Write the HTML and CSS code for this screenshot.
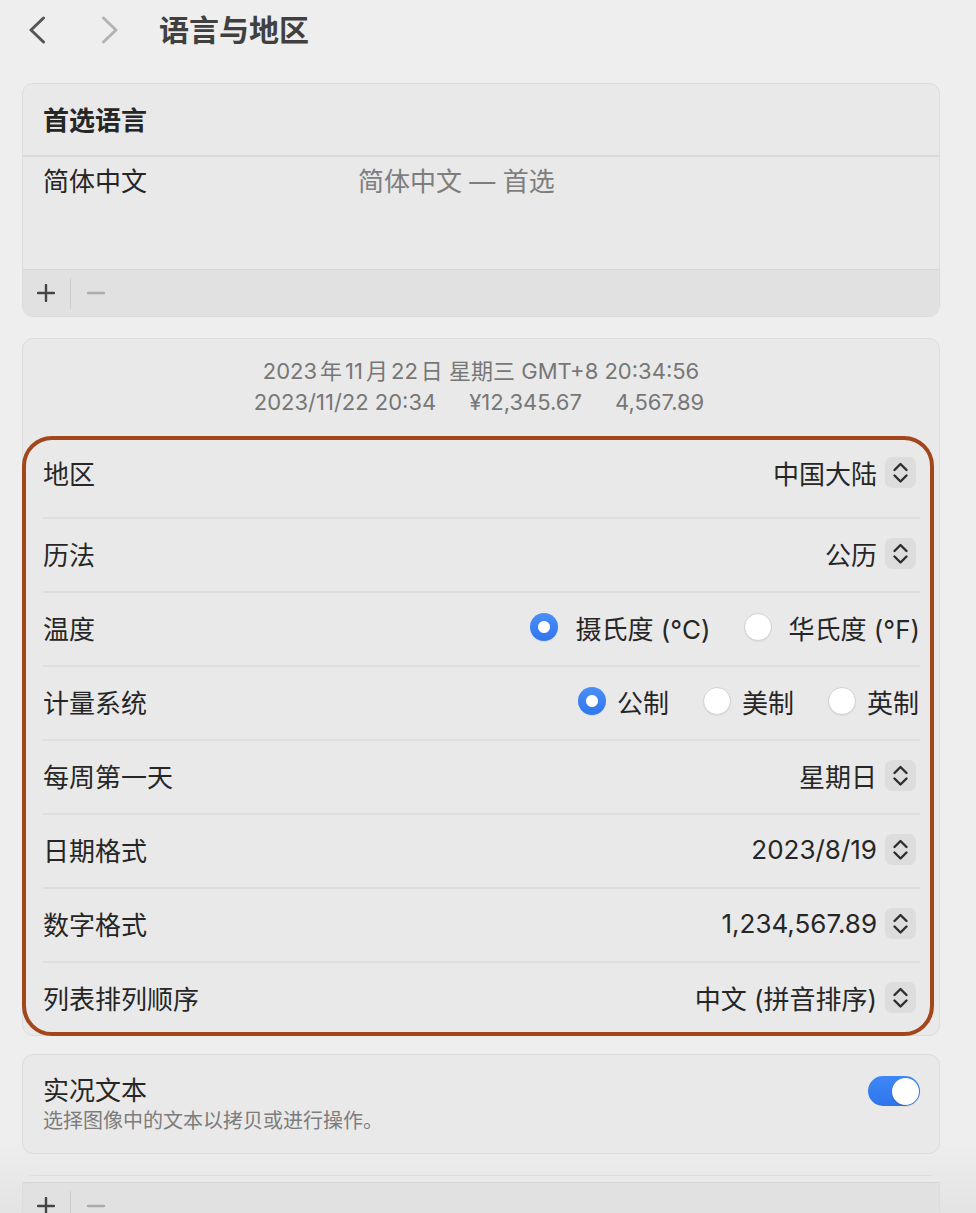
FILE: index.html
```html
<!DOCTYPE html>
<html lang="zh-CN">
<head>
<meta charset="utf-8">
<title>语言与地区</title>
<link rel="stylesheet" href="styles.css">
</head>
<body>
<header class="titlebar">
  <svg class="nav nav-back" width="16" height="28" viewBox="0 0 16 28"><polyline points="14.5,2 2,14 14.5,26" fill="none" stroke="currentColor" stroke-width="3" stroke-linecap="round" stroke-linejoin="round"/></svg>
  <svg class="nav nav-fwd" width="16" height="28" viewBox="0 0 16 28"><polyline points="1.5,2 14,14 1.5,26" fill="none" stroke="currentColor" stroke-width="3" stroke-linecap="round" stroke-linejoin="round"/></svg>
  <h1 class="title">语言与地区</h1>
</header>

<main class="content">
  <section class="card card-langs">
    <div class="card-head">首选语言</div>
    <div class="lang-list">
      <div class="lang-row"><span class="lang-name">简体中文</span><span class="lang-desc">简体中文 — 首选</span></div>
    </div>
    <div class="toolbar">
      <svg class="tb-plus" width="18" height="18" viewBox="0 0 18 18"><path d="M9 1V17M1 9H17" stroke="currentColor" stroke-width="2.4" stroke-linecap="round"/></svg>
      <span class="tb-div"></span>
      <svg class="tb-minus" width="18" height="18" viewBox="0 0 18 18"><path d="M1 9H17" stroke="currentColor" stroke-width="2.4" stroke-linecap="round"/></svg>
    </div>
  </section>

  <section class="card card-region">
    <div class="preview">
      <div class="preview-line">2023<span class="cj">年</span>11<span class="cj">月</span>22<span class="cj cj-end">日</span> 星期三 GMT+8 20:34:56</div>
      <div class="preview-line preview-split"><span>2023/11/22 20:34</span><span>¥12,345.67</span><span>4,567.89</span></div>
    </div>
    <div class="row row-first">
      <span class="label">地区</span>
      <span class="value">中国大陆<span class="stepper"><svg width="31" height="31" viewBox="0 0 31 31"><path d="M9.5 13L15.5 7L21.5 13M9.5 18.5L15.5 24.5L21.5 18.5" fill="none" stroke="currentColor" stroke-width="2.4" stroke-linecap="round" stroke-linejoin="round"/></svg></span></span>
    </div>
    <div class="row">
      <span class="label">历法</span>
      <span class="value">公历<span class="stepper"><svg width="31" height="31" viewBox="0 0 31 31"><path d="M9.5 13L15.5 7L21.5 13M9.5 18.5L15.5 24.5L21.5 18.5" fill="none" stroke="currentColor" stroke-width="2.4" stroke-linecap="round" stroke-linejoin="round"/></svg></span></span>
    </div>
    <div class="row">
      <span class="label">温度</span>
      <span class="radios radios-temp">
        <span class="radio-opt"><span class="radio radio-on"></span>摄氏度 (°C)</span>
        <span class="radio-opt"><span class="radio"></span>华氏度 (°F)</span>
      </span>
    </div>
    <div class="row">
      <span class="label">计量系统</span>
      <span class="radios radios-unit">
        <span class="radio-opt"><span class="radio radio-on"></span>公制</span>
        <span class="radio-opt"><span class="radio"></span>美制</span>
        <span class="radio-opt"><span class="radio"></span>英制</span>
      </span>
    </div>
    <div class="row">
      <span class="label">每周第一天</span>
      <span class="value">星期日<span class="stepper"><svg width="31" height="31" viewBox="0 0 31 31"><path d="M9.5 13L15.5 7L21.5 13M9.5 18.5L15.5 24.5L21.5 18.5" fill="none" stroke="currentColor" stroke-width="2.4" stroke-linecap="round" stroke-linejoin="round"/></svg></span></span>
    </div>
    <div class="row">
      <span class="label">日期格式</span>
      <span class="value">2023/8/19<span class="stepper"><svg width="31" height="31" viewBox="0 0 31 31"><path d="M9.5 13L15.5 7L21.5 13M9.5 18.5L15.5 24.5L21.5 18.5" fill="none" stroke="currentColor" stroke-width="2.4" stroke-linecap="round" stroke-linejoin="round"/></svg></span></span>
    </div>
    <div class="row">
      <span class="label">数字格式</span>
      <span class="value">1,234,567.89<span class="stepper"><svg width="31" height="31" viewBox="0 0 31 31"><path d="M9.5 13L15.5 7L21.5 13M9.5 18.5L15.5 24.5L21.5 18.5" fill="none" stroke="currentColor" stroke-width="2.4" stroke-linecap="round" stroke-linejoin="round"/></svg></span></span>
    </div>
    <div class="row">
      <span class="label">列表排列顺序</span>
      <span class="value">中文 (拼音排序)<span class="stepper"><svg width="31" height="31" viewBox="0 0 31 31"><path d="M9.5 13L15.5 7L21.5 13M9.5 18.5L15.5 24.5L21.5 18.5" fill="none" stroke="currentColor" stroke-width="2.4" stroke-linecap="round" stroke-linejoin="round"/></svg></span></span>
    </div>
    <div class="highlight"></div>
  </section>

  <section class="card card-live">
    <div class="live-text">
      <div class="live-title">实况文本</div>
      <div class="live-sub">选择图像中的文本以拷贝或进行操作。</div>
    </div>
    <span class="toggle"><span class="knob"></span></span>
  </section>

  <section class="card card-apps">
    <div class="apps-list"></div>
    <div class="toolbar">
      <svg class="tb-plus" width="18" height="18" viewBox="0 0 18 18"><path d="M9 1V17M1 9H17" stroke="currentColor" stroke-width="2.4" stroke-linecap="round"/></svg>
      <span class="tb-div"></span>
      <svg class="tb-minus" width="18" height="18" viewBox="0 0 18 18"><path d="M1 9H17" stroke="currentColor" stroke-width="2.4" stroke-linecap="round"/></svg>
    </div>
  </section>
</main>
</body>
</html>
```

FILE: styles.css
```css
* { box-sizing: border-box; }

html, body {
  margin: 0;
  padding: 0;
}

body {
  font-family: Inter, "Noto Sans CJK SC", sans-serif;
  color: #262626;
  background: linear-gradient(to bottom, #eeeeee 0, #eeeeee 1140px, #e3e3e3 1213px);
  min-height: 1213px;
  overflow: hidden;
}

/* ---------- title bar ---------- */
.titlebar {
  height: 60px;
  display: flex;
  align-items: center;
  padding-left: 29px;
}

.nav { display: block; }
.nav-back { color: #555555; }
.nav-fwd { color: #b3b3b3; margin-left: 57px; }

.title {
  margin: 0 0 0 41px;
  font-size: 30px;
  font-weight: 700;
  color: #404040;
  line-height: 40px;
}

/* ---------- layout ---------- */
.content {
  padding: 23px 36px 0 22px;
  display: flex;
  flex-direction: column;
}

.card {
  background: #e9e9e9;
  border: 1px solid #dcdcdc;
  border-radius: 11px;
  overflow: visible;
}

.card-langs { margin-bottom: 21px; }
.card-region { margin-bottom: 18px; position: relative; }
.card-live { margin-bottom: 21px; }

/* ---------- preferred languages ---------- */
.card-head {
  font-size: 26px;
  font-weight: 700;
  line-height: 32px;
  padding: 21px 20px 18px;
  border-bottom: 2px solid #dadada;
  color: #262626;
}

.lang-list {
  height: 112px;
  padding: 9px 20px 0;
}

.lang-row {
  display: grid;
  grid-template-columns: 315px auto;
  font-size: 26px;
  line-height: 32px;
}

.lang-desc { color: #7e7e7e; }

.toolbar {
  height: 47px;
  border-top: 1px solid #d6d6d6;
  background: #e1e1e1;
  display: flex;
  align-items: center;
  padding-left: 14px;
  border-radius: 0 0 10px 10px;
}

.tb-plus { color: #444444; display: block; }
.tb-minus { color: #ababab; display: block; }

.tb-div {
  width: 1px;
  height: 31px;
  background: #cfcfcf;
  margin: 0 16px 0 15px;
}

/* ---------- region card ---------- */
.preview {
  padding: 17px 0 21px;
  text-align: center;
  color: #777777;
  font-size: 22px;
  line-height: 31px;
}

.cj { margin: 0 3px; }
.cj-end { margin-right: 0; }

.preview-split {
  display: flex;
  justify-content: center;
  gap: 33px;
  padding-right: 4px;
}

.row {
  height: 74px;
  margin: 0 19px 0 20px;
  border-top: 2px solid #dedede;
  padding-bottom: 4px;
  display: flex;
  align-items: center;
  justify-content: space-between;
  font-size: 26px;
}

.row-first {
  height: 78px;
  border-top: none;
  padding-bottom: 12px;
}

.label { color: #262626; }

.value {
  display: flex;
  align-items: center;
  color: #262626;
}

.stepper {
  width: 31px;
  height: 31px;
  margin-left: 8px;
  margin-right: 4px;
  border-radius: 7px;
  background: #dddddd;
  color: #2e2e2e;
  display: flex;
}

.radios {
  display: flex;
  align-items: center;
  color: #262626;
}

.radios-temp { gap: 33px; }
.radios-unit { gap: 34px; margin-right: 1px; }

.radio-opt {
  display: flex;
  align-items: center;
}

.radios-temp .radio { margin-right: 17px; }
.radios-unit .radio { margin-right: 11px; }

.radio {
  width: 28px;
  height: 28px;
  border-radius: 50%;
  background: #ffffff;
  border: 1px solid #d2d2d2;
  box-shadow: 0 1px 1px rgba(0, 0, 0, 0.06);
  flex: none;
}

.radio-on {
  border: none;
  background: radial-gradient(circle, #ffffff 0, #ffffff 5.5px, transparent 6.5px),
              linear-gradient(to bottom, #4b8ff7, #2f76ee);
}

.highlight {
  position: absolute;
  left: -1px;
  top: 97px;
  width: 912px;
  height: 600px;
  border: 4.5px solid #a3461c;
  border-radius: 30px;
  pointer-events: none;
}

/* ---------- live text ---------- */
.card-live {
  display: flex;
  justify-content: space-between;
  align-items: flex-start;
  padding: 20px 19px 18px 20px;
}

.live-title {
  font-size: 26px;
  line-height: 32px;
  color: #262626;
}

.live-sub {
  font-size: 20px;
  line-height: 28px;
  color: #7c7c7c;
}

.toggle {
  width: 52px;
  height: 30px;
  margin-top: 1px;
  border-radius: 15px;
  background: linear-gradient(to bottom, #3f86f6, #2f76ee);
  display: flex;
  justify-content: flex-end;
  align-items: center;
  padding-right: 1.5px;
}

.knob {
  width: 27px;
  height: 27px;
  border-radius: 50%;
  background: #ffffff;
  box-shadow: 0 1px 2px rgba(0, 0, 0, 0.2);
}

/* ---------- apps card ---------- */
.card-apps { border-radius: 11px 11px 0 0; }
.apps-list { height: 6px; background: #e9e9e9; border-radius: 10px 10px 0 0; }
.card-apps .toolbar { border-radius: 0; }
```
